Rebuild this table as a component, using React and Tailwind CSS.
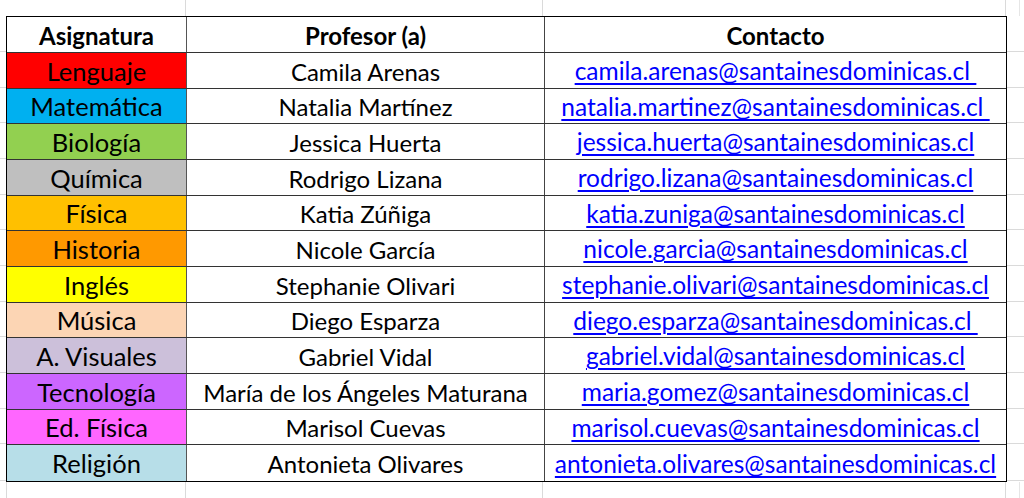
import React from "react";

const rows = [
  { s: "Lenguaje", bg: "bg-[#ff0000]", p: "Camila Arenas", e: "camila.arenas@santainesdominicas.cl", t: true, h: "h-[36px]" },
  { s: "Matemática", bg: "bg-[#00b0f0]", p: "Natalia Martínez", e: "natalia.martinez@santainesdominicas.cl", t: true, h: "h-[35px]" },
  { s: "Biología", bg: "bg-[#92d050]", p: "Jessica Huerta", e: "jessica.huerta@santainesdominicas.cl", t: false, h: "h-[36px]" },
  { s: "Química", bg: "bg-[#bfbfbf]", p: "Rodrigo Lizana", e: "rodrigo.lizana@santainesdominicas.cl", t: false, h: "h-[36px]" },
  { s: "Física", bg: "bg-[#ffc000]", p: "Katia Zúñiga", e: "katia.zuniga@santainesdominicas.cl", t: false, h: "h-[35px]" },
  { s: "Historia", bg: "bg-[#ff9900]", p: "Nicole García", e: "nicole.garcia@santainesdominicas.cl", t: false, h: "h-[36px]" },
  { s: "Inglés", bg: "bg-[#ffff00]", p: "Stephanie Olivari", e: "stephanie.olivari@santainesdominicas.cl", t: false, h: "h-[36px]" },
  { s: "Música", bg: "bg-[#fcd5b4]", p: "Diego Esparza", e: "diego.esparza@santainesdominicas.cl", t: true, h: "h-[35px]" },
  { s: "A. Visuales", bg: "bg-[#ccc0da]", p: "Gabriel Vidal", e: "gabriel.vidal@santainesdominicas.cl", t: false, h: "h-[36px]" },
  { s: "Tecnología", bg: "bg-[#cc66ff]", p: "María de los Ángeles Maturana", e: "maria.gomez@santainesdominicas.cl", t: false, h: "h-[36px]" },
  { s: "Ed. Física", bg: "bg-[#ff66ff]", p: "Marisol Cuevas", e: "marisol.cuevas@santainesdominicas.cl", t: false, h: "h-[35px]" },
  { s: "Religión", bg: "bg-[#b7dee8]", p: "Antonieta Olivares", e: "antonieta.olivares@santainesdominicas.cl", t: false, h: "h-[36px]" },
];

function GutterRow({ h }) {
  return <div className={`${h} border-b border-[#dadada]`} />;
}

export default function App() {
  return (
    <div
      className="w-[1024px] h-[498px] overflow-hidden bg-white text-black flex flex-col"
      style={{ fontFamily: "Lato, 'Open Sans', sans-serif" }}
    >
      {/* top strip */}
      <div className="flex h-[16px] shrink-0">
        <div className="w-[186px] border-r border-[#dadada]" />
        <div className="w-[357px] border-r border-[#dadada]" />
        <div className="w-[463px] border-r border-[#dadada]" />
        <div className="w-[14px] border-r border-[#e6e6e6]" />
      </div>

      {/* middle */}
      <div className="flex shrink-0">
        <div className="w-[6px] flex flex-col">
          <div className="h-[36px] border-b border-[#dadada]" />
          {rows.map((r, i) => (
            <GutterRow key={i} h={i === rows.length - 1 ? "h-[37px]" : r.h} />
          ))}
        </div>

        <div className="w-[1001px] border border-black flex flex-col">
          <div className="flex h-[36px] pt-[2px] border-b border-[#333] font-bold text-[24px] leading-none">
            <div className="w-[180px] border-r border-[#555] -mt-[2px] pt-[2px] flex items-center justify-center">Asignatura</div>
            <div className="w-[358px] border-r border-[#444] -mt-[2px] pt-[2px] flex items-center justify-center">Profesor (a)</div>
            <div className="flex-1 flex items-center justify-center">Contacto</div>
          </div>
          {rows.map((r, i) => (
            <div
              key={i}
              className={`flex ${r.h} leading-none ${i === rows.length - 1 ? "" : "border-b border-[#333]"}`}
            >
              <div className={`w-[180px] border-r border-[#555] ${r.bg} pt-[2px] flex items-center justify-center text-[25.5px] whitespace-nowrap`}>
                {r.s}
              </div>
              <div className="w-[358px] border-r border-[#444] pt-[2px] flex items-center justify-center text-[24px] whitespace-nowrap">
                {r.p}
              </div>
              <div className="flex-1 pt-[2px] flex items-center justify-center text-[24.5px]">
                <span className="text-[#0000ff] underline underline-offset-[3px] decoration-[1.5px] whitespace-pre">
                  {r.e + (r.t ? " " : "")}
                </span>
              </div>
            </div>
          ))}
        </div>

        <div className="w-[17px] flex flex-col">
          <div className="h-[36px] border-b border-[#dadada]" />
          {rows.map((r, i) => (
            <GutterRow key={i} h={i === rows.length - 1 ? "h-[37px]" : r.h} />
          ))}
        </div>
      </div>

      {/* bottom strip */}
      <div className="flex flex-1">
        <div className="w-[7px] border-r border-[#dadada]" />
        <div className="w-[179px] border-r border-[#dadada]" />
        <div className="w-[357px] border-r border-[#dadada]" />
        <div className="w-[463px] border-r border-[#dadada]" />
        <div className="w-[14px] border-r border-[#e6e6e6]" />
      </div>
    </div>
  );
}
